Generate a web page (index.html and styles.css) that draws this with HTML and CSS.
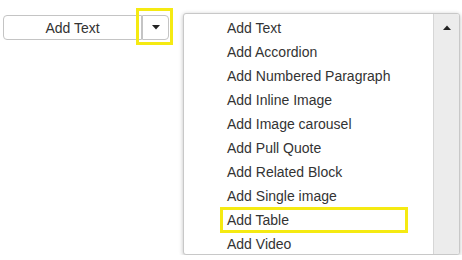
FILE: index.html
```html
<!DOCTYPE html>
<html lang="en">
<head>
    <meta charset="UTF-8">
    <meta name="viewport" content="width=device-width, initial-scale=1.0">
    <title>Add Block</title>
    <link rel="stylesheet" href="styles.css">
</head>
<body>

<div class="toolbar">
    <div class="split-button">
        <button type="button" class="split-main">Add Text</button>
        <button type="button" class="split-toggle">
            <svg width="8" height="5" viewBox="0 0 8 5"><path d="M0 0 L8 0 L4 4.5 Z" fill="#222"/></svg>
        </button>
    </div>

    <div class="menu">
        <ul class="menu-list">
            <li class="menu-item">Add Text</li>
            <li class="menu-item">Add Accordion</li>
            <li class="menu-item">Add Numbered Paragraph</li>
            <li class="menu-item">Add Inline Image</li>
            <li class="menu-item">Add Image carousel</li>
            <li class="menu-item">Add Pull Quote</li>
            <li class="menu-item">Add Related Block</li>
            <li class="menu-item">Add Single image</li>
            <li class="menu-item highlight">Add Table</li>
            <li class="menu-item">Add Video</li>
        </ul>
        <div class="scrollbar">
            <svg width="8" height="5" viewBox="0 0 8 5"><path d="M0 5 L8 5 L4 0.5 Z" fill="#222"/></svg>
        </div>
    </div>
</div>

</body>
</html>
```

FILE: styles.css
```css
* {
    box-sizing: border-box;
    margin: 0;
    padding: 0;
    font-family: "Liberation Sans", Arial, sans-serif;
}

body {
    background-color: #fff;
    color: #333;
    font-size: 14px;
}

.toolbar {
    display: flex;
    align-items: flex-start;
}

.split-button {
    display: flex;
    margin: 15px 0 0 3px;
}

.split-button button {
    height: 25px;
    border: 1px solid #c4c4c4;
    background-color: #fff;
    color: #333;
    font-size: 14px;
    cursor: pointer;
}

.split-main {
    width: 139px;
    border-radius: 4px 0 0 4px;
}

.split-toggle {
    position: relative;
    width: 27px;
    border-left: none;
    border-radius: 0 4px 4px 0;
    display: flex;
    align-items: center;
    justify-content: center;
}

/* yellow callout box round the toggle */
.split-toggle::after {
    content: "";
    position: absolute;
    top: -8px;
    bottom: -6px;
    left: -7px;
    right: -5px;
    border: 3px solid #f5ea12;
}

.menu {
    display: flex;
    width: 277px;
    height: 242px;
    margin: 13px 0 0 14px;
    border: 1px solid #c8c8c8;
    border-radius: 3px;
    box-shadow: 0 1px 4px rgba(0, 0, 0, 0.25);
    background-color: #fff;
    overflow: hidden;
}

.menu-list {
    flex: 1;
    list-style: none;
    padding-top: 2px;
}

.menu-item {
    width: 186px;
    height: 24px;
    line-height: 24px;
    margin-left: 37px;
    padding-left: 6px;
    color: #333;
}

.menu-item.highlight {
    outline: 3px solid #f5ea12;
    outline-offset: -2px;
}

.scrollbar {
    width: 26px;
    background-color: #ececec;
    border-left: 1px solid #d6d6d6;
    display: flex;
    justify-content: center;
    padding-top: 11px;
}
```
